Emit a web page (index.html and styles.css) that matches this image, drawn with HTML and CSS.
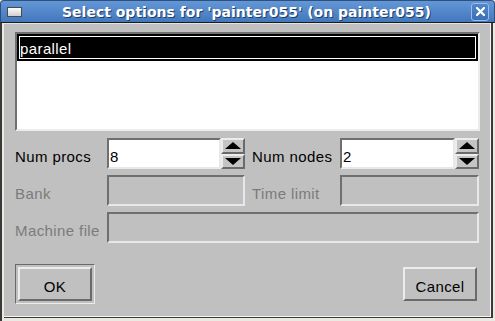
FILE: index.html
```html
<!DOCTYPE html>
<html lang="en">
<head>
  <meta charset="UTF-8">
  <title>Select options</title>
  <link rel="stylesheet" href="styles.css">
</head>
<body>
  <div class="window">
    <!-- Title bar -->
    <div class="titlebar">
      <span class="win-icon"></span>
      <span class="title">Select options for 'painter055' (on painter055)</span>
      <span class="close-btn">
        <svg width="9" height="9" viewBox="0 0 9 9"><path d="M1 1 L8 8 M8 1 L1 8" stroke="#fff" stroke-width="2.2" stroke-linecap="square"/></svg>
      </span>
    </div>

    <div class="frame">
      <div class="client">
        <div class="listbox">
          <div class="item selected">parallel</div>
        </div>

        <div class="form">
          <span class="label">Num procs</span>
          <div class="spinbox">
            <div class="entry">8</div>
            <div class="spin">
              <span class="spin-btn"><i class="arrow-up"></i></span>
              <span class="spin-btn"><i class="arrow-down"></i></span>
            </div>
          </div>
          <span class="label right">Num nodes</span>
          <div class="spinbox">
            <div class="entry">2</div>
            <div class="spin">
              <span class="spin-btn"><i class="arrow-up"></i></span>
              <span class="spin-btn"><i class="arrow-down"></i></span>
            </div>
          </div>

          <span class="label disabled">Bank</span>
          <div class="entry off"></div>
          <span class="label right disabled">Time limit</span>
          <div class="entry off"></div>

          <span class="label disabled">Machine file</span>
          <div class="entry off wide"></div>
        </div>

        <!-- Buttons -->
        <div class="buttons">
          <div class="default-ring"><button class="btn">OK</button></div>
          <button class="btn cancel">Cancel</button>
        </div>
      </div>
    </div>
  </div>
</body>
</html>
```

FILE: styles.css
```css
* {
  margin: 0;
  padding: 0;
  box-sizing: border-box;
}

html, body {
  width: 100%;
  height: 100%;
  overflow: hidden;
  background: #ece9e3;
}

.window {
  width: 495px;
  height: 321px;
  display: flex;
  flex-direction: column;
  font-family: "Liberation Sans", Arial, sans-serif;
  font-size: 15px;
  letter-spacing: 0.4px;
}

/* Title bar */
.titlebar {
  height: 23px;
  flex: none;
  display: flex;
  align-items: center;
  padding: 0 5px 0 6px;
  background: linear-gradient(#6397d6, #4277bd);
  border: 1px solid #2f4f7c;
  border-bottom-color: #1c1c1c;
  border-radius: 4px 4px 0 0;
}

.win-icon {
  width: 15px;
  height: 10px;
  margin-top: 1px;
  border: 1px solid #4a4a4a;
  background: linear-gradient(#fbfbfb, #cfcfcf);
}

.title {
  flex: 1;
  text-align: center;
  color: #fff;
  font-family: "DejaVu Sans", sans-serif;
  font-weight: bold;
  font-size: 14px;
  letter-spacing: 0;
  text-shadow: 1px 1px 0 #1f3d66;
}

.close-btn {
  width: 18px;
  height: 18px;
  display: flex;
  align-items: center;
  justify-content: center;
  border: 1px solid #9dbbe3;
  border-radius: 3px;
  background: linear-gradient(#4f86ca, #3b70b6);
}

/* Window frame */
.frame {
  flex: 1;
  display: flex;
  border-left: 2px solid #3a3a3a;
  padding: 0 2px 3px 2px;
}

.client {
  flex: 1;
  display: flex;
  flex-direction: column;
  background: #c0c0c0;
  border-right: 2px solid #3a3a3a;
  border-bottom: 1px solid #3a3a3a;
  box-shadow: inset -1px -1px 0 #f4f4f4, inset 0 1px 0 #e4e4e4;
  padding: 9px 9px 0 11px;
}

/* List */
.listbox {
  width: 465px;
  height: 99px;
  background: #fff;
  border: 2px solid;
  border-color: #6f6f6f #ececec #ececec #6f6f6f;
}

.item {
  height: 27px;
  line-height: 24px;
  padding: 3px 0 0 3px;
  font-size: 15px;
}

.item.selected {
  background: #000;
  color: #fff;
  box-shadow: inset 0 0 0 2px #000, inset 0 0 0 3px #fff;
}

/* Form grid */
.form {
  margin-top: 7px;
  display: grid;
  grid-template-columns: 92px 138px 95px 139px;
  grid-auto-rows: 31px;
  row-gap: 6px;
}

.label {
  color: #000;
  white-space: nowrap;
  padding-top: 6px;
  line-height: 25px;
}

.label.right {
  padding-left: 7px;
}

.label.disabled {
  color: #7b7b7b;
}

.spinbox {
  display: flex;
  height: 31px;
}

.entry {
  flex: 1;
  height: 31px;
  background: #fff;
  border: 2px solid;
  border-color: #6f6f6f #e8e8e8 #e8e8e8 #6f6f6f;
  padding: 6px 0 0 1px;
  line-height: 21px;
}

.entry.off {
  background: #c0c0c0;
}

.entry.wide {
  grid-column: 2 / 5;
}

.spin {
  width: 24px;
  display: flex;
  flex-direction: column;
}

.spin-btn {
  flex: 1;
  display: flex;
  align-items: center;
  justify-content: center;
  background: #c4c4c4;
  border: 2px solid;
  border-color: #ececec #6a6a6a #6a6a6a #ececec;
}

.arrow-up {
  width: 0;
  height: 0;
  border-left: 8px solid transparent;
  border-right: 8px solid transparent;
  border-bottom: 7px solid #000;
}

.arrow-down {
  width: 0;
  height: 0;
  border-left: 8px solid transparent;
  border-right: 8px solid transparent;
  border-top: 7px solid #000;
}

/* Buttons */
.buttons {
  margin-top: 21px;
  display: flex;
  justify-content: space-between;
  align-items: center;
  width: 465px;
}

.default-ring {
  padding: 2px;
  border: 1px solid;
  border-color: #6a6a6a #ececec #ececec #6a6a6a;
}

.btn {
  width: 74px;
  height: 34px;
  padding-top: 4px;
  background: #c0c0c0;
  border: 2px solid;
  border-color: #ececec #6a6a6a #6a6a6a #ececec;
  font-family: "Liberation Sans", Arial, sans-serif;
  font-size: 15px;
  letter-spacing: 0.4px;
  color: #000;
}

.btn.cancel {
  margin-right: 3px;
}
```
